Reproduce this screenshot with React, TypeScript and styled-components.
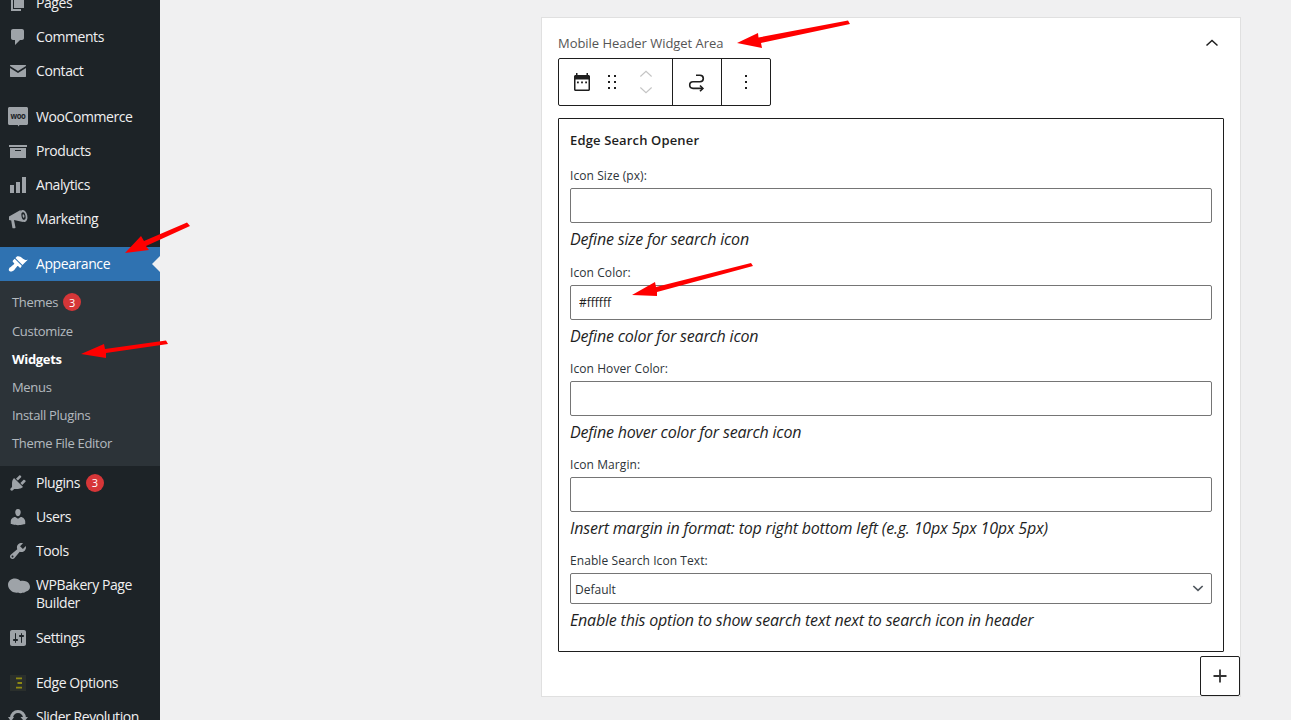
import React from "react";
import styled, { createGlobalStyle } from "styled-components";

const GlobalStyle = createGlobalStyle`
  html, body {
    margin: 0;
    height: 100%;
    overflow: hidden;
    background: #f0f0f1;
    font-family: "Open Sans", "Liberation Sans", sans-serif;
    font-size: 13px;
    color: #1e1e1e;
  }
`;

const Page = styled.div`
  position: relative;
  display: flex;
  align-items: flex-start;
  height: 720px;
  overflow: hidden;
`;

const Sidebar = styled.nav`
  flex: 0 0 160px;
  width: 160px;
  margin-top: -14px;
  padding-bottom: 40px;
  background: #1d2327;
`;

const Gap = styled.div<{ $h: number }>`
  height: ${(p) => p.$h}px;
`;

const MenuItem = styled.div<{ $active?: boolean; $tall?: boolean }>`
  position: relative;
  display: flex;
  align-items: center;
  height: ${(p) => (p.$tall ? 52 : 34)}px;
  padding-left: 8px;
  background: ${(p) => (p.$active ? "#2f72b1" : "transparent")};
  color: ${(p) => (p.$active ? "#fff" : "#f0f0f1")};
  font-size: 14px;
  line-height: 18px;
  letter-spacing: -0.42px;
`;

const MenuIcon = styled.span<{ $top?: boolean }>`
  display: flex;
  flex: 0 0 20px;
  align-self: ${(p) => (p.$top ? "flex-start" : "center")};
  align-items: center;
  justify-content: center;
  width: 20px;
  height: 20px;
  margin: ${(p) => (p.$top ? "7px 8px 0 0" : "0 8px 0 0")};

  svg {
    overflow: visible;
  }
`;

const ActiveNotch = styled.span`
  position: absolute;
  right: 0;
  top: 9px;
  border: 8px solid transparent;
  border-right-color: #f0f0f1;
  border-left-width: 0;
`;

const Badge = styled.span<{ $gap: number }>`
  display: inline-flex;
  align-items: center;
  justify-content: center;
  width: 18px;
  height: 18px;
  margin-left: ${(p) => p.$gap}px;
  border-radius: 50%;
  background: #d63638;
  color: #fff;
  font-size: 11px;
  letter-spacing: 0;
`;

const BadgeRow = styled.span`
  display: flex;
  align-items: center;
`;

const SubMenu = styled.div`
  padding: 7px 0 9px;
  background: #2c3338;
`;

const SubItem = styled.div<{ $current?: boolean; $first?: boolean }>`
  display: flex;
  align-items: center;
  height: ${(p) => (p.$first ? 29 : 28)}px;
  padding-bottom: ${(p) => (p.$first ? 1 : 0)}px;
  box-sizing: border-box;
  padding-left: 12px;
  color: ${(p) => (p.$current ? "#fff" : "rgba(240, 246, 252, 0.7)")};
  font-weight: ${(p) => (p.$current ? 700 : 400)};
  font-size: 13px;
  letter-spacing: -0.32px;
`;

const Main = styled.main`
  flex: 1;
  padding: 17px 0 0 381px;
`;

const Card = styled.section`
  box-sizing: border-box;
  width: 700px;
  height: 680px;
  padding: 16px 16px 0;
  border: 1px solid #e0e0e0;
  background: #fff;
`;

const CardHeader = styled.header`
  display: flex;
  align-items: center;
  justify-content: space-between;
  height: 18px;
  margin-bottom: 6px;
  color: #555;
  font-size: 13px;
  letter-spacing: -0.04px;
`;

const Toolbar = styled.div`
  display: inline-flex;
  box-sizing: border-box;
  height: 48px;
  margin-bottom: 12px;
  border: 1px solid #1e1e1e;
  border-radius: 2px;
  vertical-align: top;
`;

const ToolGroup = styled.div<{ $w: number }>`
  display: flex;
  align-items: center;
  justify-content: center;
  box-sizing: border-box;
  width: ${(p) => p.$w}px;
  border-right: 1px solid #1e1e1e;

  &:last-child {
    border-right: none;
  }
`;

const BlockTools = styled.div`
  display: flex;
  align-items: center;
  width: 100%;
  padding-left: 11px;
  gap: 6px;
`;

const Mover = styled.div`
  display: flex;
  flex-direction: column;
  margin-left: 7px;
  gap: 0;

  svg {
    display: block;
  }

  svg + svg {
    margin-top: -4px;
  }
`;

const Block = styled.div`
  box-sizing: border-box;
  height: 534px;
  padding: 11px 11px 0;
  border: 1px solid #1e1e1e;
  border-radius: 1px;
`;

const BlockTitle = styled.h3`
  margin: 0 0 15.4px;
  font-size: 13px;
  font-weight: 600;
  line-height: 21px;
  letter-spacing: 0.15px;
`;

const Field = styled.div`
  margin-bottom: 11.25px;
`;

const Label = styled.label`
  display: block;
  height: 18px;
  margin-bottom: 4px;
  font-size: 12px;
  line-height: 19.5px;
  letter-spacing: 0.08px;
  color: #2c3338;
`;

const TextInput = styled.input`
  display: block;
  box-sizing: border-box;
  width: 100%;
  height: 35px;
  padding: 0 8px;
  border: 1px solid #757575;
  border-radius: 2px;
  background: #fff;
  color: #1e1e1e;
  font: 12px "Open Sans", sans-serif;
  outline: none;
`;

const SelectWrap = styled.div`
  position: relative;
`;

const Select = styled.select`
  display: block;
  box-sizing: border-box;
  width: 100%;
  height: 31px;
  padding: 1px 4px 0;
  border: 1px solid #757575;
  border-radius: 2px;
  background: #fff;
  color: #2c3338;
  font: 12px "Open Sans", sans-serif;
  appearance: none;
  outline: none;
`;

const SelectChevron = styled.span`
  position: absolute;
  right: 6px;
  top: 7px;
  display: flex;
  pointer-events: none;
`;

const Hint = styled.p`
  margin: 4px 0 0;
  font-size: 16px;
  font-style: italic;
  line-height: 24px;
  color: #1e1e1e;
  letter-spacing: -0.19px;
`;

const AddRow = styled.div`
  display: flex;
  justify-content: flex-end;
  margin: 4px -16px 0 0;
`;

const AddButton = styled.button`
  display: flex;
  align-items: center;
  justify-content: center;
  box-sizing: border-box;
  width: 40px;
  height: 40px;
  padding: 0;
  border: 1px solid #1e1e1e;
  border-radius: 2px;
  background: #fff;
`;

const Arrows = styled.svg`
  position: absolute;
  inset: 0;
  pointer-events: none;
`;

const GREY = "#9ea3a8";

const Dash = ({ d, color = GREY }: { d: string; color?: string }) => (
  <svg width="20" height="20" viewBox="0 0 20 20" fill={color}>
    <path d={d} />
  </svg>
);

const WooIcon = () => (
  <svg width="20" height="20" viewBox="0 0 20 20">
    <path
      d="M1.500 0h17c.8 0 1.500.7 1.500 1.500v15c0 .8-.7 1.500-1.500 1.500h-7l-1 1.500-.8-1.500H1.500C.7 18 0 17.300 0 16.500v-15C0 .7.7 0 1.500 0z"
      fill={GREY}
    />
    <text x="10" y="11.500" fontSize="8" fontWeight="700" textAnchor="middle" fill="#1d2327" fontFamily="Open Sans" textLength="15" lengthAdjust="spacingAndGlyphs">
      woo
    </text>
  </svg>
);

const EdgeIcon = () => (
  <svg width="20" height="20" viewBox="0 0 20 20">
    <rect x="2" y="2" width="16" height="16" fill="#2a2f2c" />
    <path d="M8 4.500h6v1.800H8zM9.500 9.100H14v1.800H9.500zM8 13.700h6v1.800H8z" fill="#8f8a12" />
  </svg>
);

const MarketingIcon = () => (
  <svg width="20" height="20" viewBox="0 0 20 20" fill={GREY}>
    <path d="M1 7.500l11.500-6.500 2.500 12-9-2 1.500 7.500c.1.500-.2.800-.7.800H5.200c-.4 0-.7-.2-.8-.6L3.200 11.500 1 11z" />
    <ellipse cx="15.500" cy="7" rx="3.800" ry="6.200" transform="rotate(-12 15.500 7)" />
    <ellipse cx="15.500" cy="7" rx="2" ry="3.800" transform="rotate(-12 15.500 7)" fill="#1d2327" />
    <ellipse cx="15.500" cy="7" rx=".9" ry="1.800" transform="rotate(-12 15.500 7)" />
  </svg>
);

const SliderIcon = () => (
  <svg width="20" height="20" viewBox="0 0 20 20" fill={GREY}>
    <path d="M3.500 11a6.500 6.500 0 0 1 13 0" fill="none" stroke={GREY} strokeWidth="3" />
    <path d="M12.500 10h7.500l-3.700 4.500zM0 10h6l-3 4.500z" />
  </svg>
);

const ICONS: Record<string, string> = {
  pages: "M6 15V2h10v13H6zm-1 1h8v2H3V5h2v11z",
  comments: "M5 2h9c1.100 0 2 .9 2 2v7c0 1.100-.9 2-2 2h-2l-5 5v-5H5c-1.100 0-2-.9-2-2V4c0-1.100.9-2 2-2z",
  contact:
    "M2 4.500C2 4.200 2.200 4 2.500 4h15c.3 0 .5.2.5.5V5l-8 5-8-5v-.5zM2 7l8 5 8-5v8.500c0 .3-.2.500-.5.500h-15c-.3 0-.5-.2-.5-.5V7z",
  products: "M19 4v2H1V4h18zM2 7h16v10H2V7zm11 3V9H7v1h6z",
  analytics: "M18 18V2h-4v16h4zm-6 0V7H8v11h4zm-6 0v-8H2v8h4z",
  brush:
    "M14.480 11.060L7.410 3.990l1.500-1.500c.5-.56 2.300-.47 3.510.32 1.210.8 1.430 1.280 2.910 2.100 1.180.64 2.450 1.260 4.450.85zm-.71.71L6.700 4.700 4.930 6.470c-.39.39-.39 1.020 0 1.410l1.060 1.060c.39.39.39 1.030 0 1.420-.6.6-1.430 1.110-2.210 1.690-.35.26-.7.53-1.010.84C1.430 13.230 0 15.600 1.400 17s3.770-.03 5.120-1.370c.31-.31.58-.66.84-1.010.58-.78 1.090-1.610 1.690-2.210.39-.39 1.030-.39 1.420 0l1.060 1.060c.39.39 1.020.39 1.410 0z",
  plugin:
    "M13.110 4.360L9.870 7.600 8 5.730l3.240-3.240c.35-.34 1.050-.2 1.560.32.52.51.66 1.210.31 1.550zm-8 1.770l.91-1.120 9.010 9.010-1.190.84c-.71.71-2.630 1.160-3.820 1.160H6.140L4.900 17.260c-.59.59-1.540.59-2.120 0-.59-.58-.59-1.530 0-2.120l1.240-1.240v-3.880c0-1.130.4-3.190 1.090-3.890zm7.260 3.970l3.240-3.240c.34-.35 1.040-.21 1.550.31.52.51.66 1.210.31 1.550l-3.240 3.250z",
  users:
    "M10 9.250c-2.270 0-2.730-3.440-2.730-3.440C7 4.020 7.820 2 9.970 2c2.160 0 2.980 2.020 2.710 3.810 0 0-.41 3.440-2.680 3.440zm0 2.570L12.720 10c2.390 0 4.520 2.330 4.520 4.530v2.490s-3.650 1.130-7.240 1.130c-3.650 0-7.240-1.130-7.240-1.130v-2.490c0-2.250 1.940-4.480 4.470-4.480z",
  tools:
    "M16.680 9.770c-1.340 1.340-3.300 1.670-4.950.99l-5.410 6.520c-.99.99-2.590.99-3.580 0s-.99-2.590 0-3.570l6.520-5.420c-.68-1.650-.35-3.610.99-4.950 1.280-1.280 3.120-1.620 4.720-1.060l-2.890 2.890 2.820 2.820 2.860-2.870c.53 1.580.18 3.390-1.080 4.650zM3.810 16.210c.4.39 1.040.39 1.430 0 .4-.4.4-1.040 0-1.430-.39-.4-1.030-.4-1.430 0-.39.39-.39 1.030 0 1.430z",
  bakery:
    "M0 10C0 6 3 3.500 7 3.500c2.500 0 4 1 5.500 2.500 1.500-.5 4-.5 6 .5 2.500 1 3.500 3.500 3.500 5.500 0 2.500-2 4-4 4.500-1 1-2 1.500-3 1-1.500 1-3.500 1-5 0-2 .5-4.500 0-6-1C2 15 0 13 0 10z",
  settings:
    "M18 16V4c0-1.100-.9-2-2-2H4c-1.100 0-2 .9-2 2v12c0 1.100.9 2 2 2h12c1.100 0 2-.9 2-2zM8 11h1c.55 0 1 .45 1 1s-.45 1-1 1H8v1.500c0 .28-.22.5-.5.5s-.5-.22-.5-.5V13H6c-.55 0-1-.45-1-1s.45-1 1-1h1V5.500c0-.28.22-.5.5-.5s.5.22.5.5V11zm5-2h-1c-.55 0-1-.45-1-1s.45-1 1-1h1V5.500c0-.28.22-.5.5-.5s.5.22.5.5V7h1c.55 0 1 .45 1 1s-.45 1-1 1h-1v5.500c0 .28-.22.5-.5.5s-.5-.22-.5-.5V9z",
};

const Item = ({ icon, children, tall }: { icon: string; children: React.ReactNode; tall?: boolean }) => (
  <MenuItem $tall={tall}>
    <MenuIcon $top={tall}>
      <Dash d={ICONS[icon]} />
    </MenuIcon>
    <span>{children}</span>
  </MenuItem>
);

const Stroke = ({ size = 24, d, color = "#1e1e1e", width = 1.5 }: { size?: number; d: string; color?: string; width?: number }) => (
  <svg width={size} height={size} viewBox="0 0 24 24" fill="none" stroke={color} strokeWidth={width}>
    <path d={d} />
  </svg>
);

const CalendarIcon = () => (
  <svg width="24" height="24" viewBox="0 0 24 24" fill="#1e1e1e">
    <path d="M6 3h1.500v2h9V3H18v2h.5c.8 0 1.500.7 1.500 1.500v13c0 .8-.7 1.500-1.500 1.500h-13C4.700 21 4 20.300 4 19.500v-13C4 5.700 4.700 5 5.500 5H6V3zM5.500 9.500v10h13v-10h-13z" />
    <rect x="7" y="11.500" width="1.800" height="1.800" />
    <rect x="11.100" y="11.500" width="1.800" height="1.800" />
    <rect x="15.200" y="11.500" width="1.800" height="1.800" />
  </svg>
);

const DragIcon = () => (
  <svg width="24" height="24" viewBox="0 0 24 24" fill="#1e1e1e">
    <path d="M8 7h2V5H8v2zm0 6h2v-2H8v2zm0 6h2v-2H8v2zm6-14v2h2V5h-2zm0 8h2v-2h-2v2zm0 6h2v-2h-2v2z" />
  </svg>
);

const MoreIcon = () => (
  <svg width="24" height="24" viewBox="0 0 24 24" fill="#1e1e1e">
    <path d="M13 19h-2v-2h2v2zm0-6h-2v-2h2v2zm0-6h-2V5h2v2z" />
  </svg>
);

const LoopIcon = () => (
  <svg width="24" height="24" viewBox="0 0 24 24" fill="none" stroke="#1e1e1e" strokeWidth="1.600">
    <path d="M11 5.200h4a3.300 3.300 0 0 1 0 6.600H8a3.300 3.300 0 0 0 0 6.600h9.500" />
    <path d="M15 15.500l2.900 2.900-2.900 2.900" />
  </svg>
);

const fields = [
  { label: "Icon Size (px):", value: "", hint: "Define size for search icon" },
  { label: "Icon Color:", value: "#ffffff", hint: "Define color for search icon" },
  { label: "Icon Hover Color:", value: "", hint: "Define hover color for search icon" },
  { label: "Icon Margin:", value: "", hint: "Insert margin in format: top right bottom left (e.g. 10px 5px 10px 5px)" },
];

export default function App() {
  return (
    <>
      <GlobalStyle />
      <Page>
        <Sidebar>
          <Item icon="pages">Pages</Item>
          <Item icon="comments">Comments</Item>
          <Item icon="contact">Contact</Item>
          <Gap $h={12} />
          <MenuItem>
            <MenuIcon>
              <WooIcon />
            </MenuIcon>
            <span>WooCommerce</span>
          </MenuItem>
          <Item icon="products">Products</Item>
          <Item icon="analytics">Analytics</Item>
          <MenuItem>
            <MenuIcon>
              <MarketingIcon />
            </MenuIcon>
            <span>Marketing</span>
          </MenuItem>
          <Gap $h={11} />
          <MenuItem $active>
            <MenuIcon>
              <Dash d={ICONS.brush} color="#fff" />
            </MenuIcon>
            <span>Appearance</span>
            <ActiveNotch />
          </MenuItem>
          <SubMenu>
            <SubItem $first>
              Themes<Badge $gap={5}>3</Badge>
            </SubItem>
            <SubItem>Customize</SubItem>
            <SubItem $current>Widgets</SubItem>
            <SubItem>Menus</SubItem>
            <SubItem>Install Plugins</SubItem>
            <SubItem>Theme File Editor</SubItem>
          </SubMenu>
          <Item icon="plugin">
            <BadgeRow>
              Plugins<Badge $gap={6}>3</Badge>
            </BadgeRow>
          </Item>
          <Item icon="users">Users</Item>
          <Item icon="tools">Tools</Item>
          <Item icon="bakery" tall>
            WPBakery Page
            <br />
            Builder
          </Item>
          <Gap $h={1} />
          <Item icon="settings">Settings</Item>
          <Gap $h={11} />
          <MenuItem>
            <MenuIcon>
              <EdgeIcon />
            </MenuIcon>
            <span>Edge Options</span>
          </MenuItem>
          <MenuItem>
            <MenuIcon>
              <SliderIcon />
            </MenuIcon>
            <span>Slider Revolution</span>
          </MenuItem>
        </Sidebar>
        <Main>
          <Card>
            <CardHeader>
              <span>Mobile Header Widget Area</span>
              <Stroke d="M6.500 14.500L12 9.500l5.500 5" />
            </CardHeader>
            <Toolbar>
              <ToolGroup $w={114}>
                <BlockTools>
                  <CalendarIcon />
                  <DragIcon />
                  <Mover>
                    <Stroke size={18} d="M4.500 14L12 7l7.500 7" color="#c4c4c4" />
                    <Stroke size={18} d="M4.500 10L12 17l7.500-7" color="#c4c4c4" />
                  </Mover>
                </BlockTools>
              </ToolGroup>
              <ToolGroup $w={49}>
                <LoopIcon />
              </ToolGroup>
              <ToolGroup $w={48}>
                <MoreIcon />
              </ToolGroup>
            </Toolbar>
            <Block>
              <BlockTitle>Edge Search Opener</BlockTitle>
              {fields.map((f) => (
                <Field key={f.label}>
                  <Label>{f.label}</Label>
                  <TextInput readOnly value={f.value} />
                  <Hint>{f.hint}</Hint>
                </Field>
              ))}
              <Field>
                <Label>Enable Search Icon Text:</Label>
                <SelectWrap>
                  <Select defaultValue="default">
                    <option value="default">Default</option>
                  </Select>
                  <SelectChevron>
                    <Stroke size={16} d="M5 9l7 6.500 7-6.500" color="#50575e" width={2.500} />
                  </SelectChevron>
                </SelectWrap>
                <Hint>Enable this option to show search text next to search icon in header</Hint>
              </Field>
            </Block>
            <AddRow>
              <AddButton aria-label="Add block">
                <Stroke d="M12 5.500v13M5.500 12h13" width={1.800} color="#333" />
              </AddButton>
            </AddRow>
          </Card>
        </Main>
        <Arrows width="1291" height="720" viewBox="0 0 1291 720" fill="#ff0000">
          <path d="M737 43L758 33 758.500 37.500 848 20.500 850 24 761 43 762 48z" />
          <path d="M125 253L141 236 144 241 187 222.500 190 226 146 246 149 250z" />
          <path d="M81 354L104 344 105 349 166 340.500 168 344 106 353 106 358z" />
          <path d="M632 295L655 282 656 287 751 263 753 266 657 292 657 296z" />
        </Arrows>
      </Page>
    </>
  );
}
